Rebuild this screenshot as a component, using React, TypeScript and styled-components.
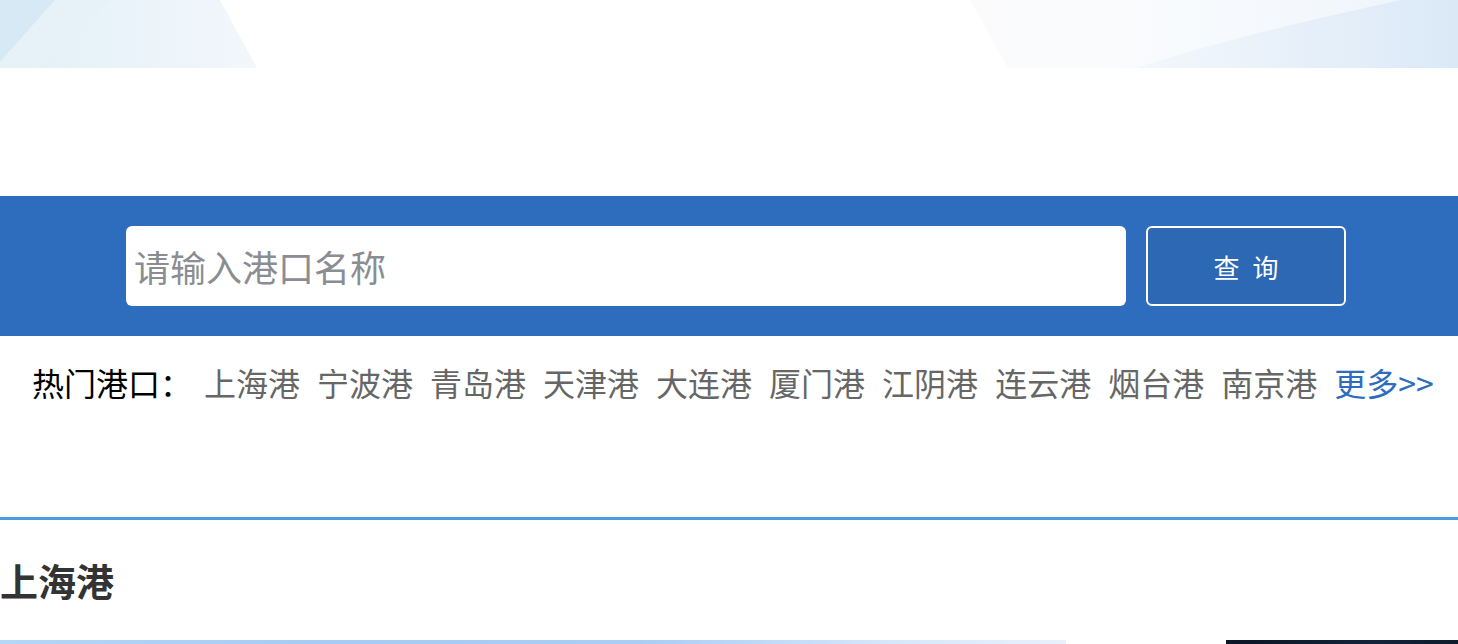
import styled, { createGlobalStyle } from 'styled-components';

const GlobalStyle = createGlobalStyle`
	html, body {
		margin: 0;
		padding: 0;
		background: #ffffff;
		font-family: "Noto Sans CJK SC", "Noto Sans", sans-serif;
	}
	* {
		box-sizing: border-box;
	}
`;

const Page = styled.div`
	width: 100%;
	overflow: hidden;
`;

const Banner = styled.svg`
	display: block;
	width: 100%;
	height: 68px;
`;

const SearchBar = styled.div`
	margin-top: 128px;
	height: 140px;
	background: #2e6dbd;
	display: flex;
	align-items: center;
	padding-left: 126px;
	gap: 20px;
`;

const SearchInput = styled.input`
	width: 1000px;
	height: 80px;
	border: none;
	border-radius: 6px;
	background: #ffffff;
	padding: 0 0 0 8px;
	font-family: inherit;
	font-size: 36px;
	color: #333;
	outline: none;

	&::placeholder {
		color: #8a8d91;
	}
`;

const SearchButton = styled.button`
	width: 200px;
	height: 80px;
	border: 2px solid #ffffff;
	border-radius: 6px;
	background: #2c68b3;
	color: #ffffff;
	font-family: inherit;
	font-size: 26px;
	letter-spacing: 13px;
	padding: 0 0 0 13px;
	cursor: pointer;
`;

const HotRow = styled.div`
	display: flex;
	align-items: center;
	padding: 30px 0 0 32px;
	font-size: 32px;
	line-height: 32px;
	white-space: nowrap;
`;

const HotLabel = styled.span`
	color: #000000;
	margin-right: 12px;
`;

const PortList = styled.div`
	display: flex;
	gap: 17px;
`;

const PortLink = styled.a<{ $more?: boolean }>`
	color: ${(p) => (p.$more ? '#2e6dbd' : '#666666')};
	text-decoration: none;
	cursor: pointer;
`;

const Divider = styled.div`
	margin-top: 119px;
	height: 3px;
	background: #4a9de2;
`;

const PortTitle = styled.h2`
	margin: 40px 0 0;
	font-size: 38px;
	line-height: 40px;
	font-weight: 700;
	color: #333333;
`;

const Gallery = styled.div`
	margin-top: 40px;
	display: flex;
	gap: 160px;
`;

const Slide = styled.div<{ $dark?: boolean; $width: number }>`
	flex: 0 0 ${(p) => p.$width}px;
	height: 200px;
	background: ${(p) =>
		p.$dark
			? 'linear-gradient(90deg, #0b1626 0%, #13233a 50%, #0a1422 100%)'
			: 'linear-gradient(90deg, #b4d6f7 0%, #a6cbf4 30%, #a9cdf5 60%, #d8e8fb 85%, #e9f0fc 100%)'};
`;

const ports = ['上海港', '宁波港', '青岛港', '天津港', '大连港', '厦门港', '江阴港', '连云港', '烟台港', '南京港'];

const App = () => {
	return (
		<Page>
			<GlobalStyle />
			<Banner viewBox="0 0 1458 68" preserveAspectRatio="none">
				<defs>
					<linearGradient id="leftFill" x1="0" y1="0" x2="1" y2="0">
						<stop offset="0" stopColor="#e2eff8" />
						<stop offset="1" stopColor="#f2f7fb" />
					</linearGradient>
					<linearGradient id="rightFill" x1="0" y1="0" x2="1" y2="0">
						<stop offset="0" stopColor="#fbfbfc" />
						<stop offset="0.5" stopColor="#f7fafd" />
						<stop offset="1" stopColor="#eef4fb" />
					</linearGradient>
					<linearGradient id="rightBlue" x1="0" y1="0" x2="1" y2="0">
						<stop offset="0" stopColor="#f3f7fc" />
						<stop offset="1" stopColor="#dbe9f7" />
					</linearGradient>
				</defs>
				<polygon points="0,0 220,0 257,68 0,68" fill="url(#leftFill)" />
				<polygon points="0,0 55,0 0,62" fill="#d7e9f5" />
				<polygon points="55,0 110,0 40,68 0,68 0,62" fill="#e6f2f8" />
				<polygon points="970,0 1458,0 1458,68 1008,68" fill="url(#rightFill)" />
				<path d="M1400,0 L1458,0 L1458,68 L1137,68 C1220,40 1320,18 1400,0 Z" fill="url(#rightBlue)" />
			</Banner>

			<SearchBar>
				<SearchInput placeholder="请输入港口名称" />
				<SearchButton>查询</SearchButton>
			</SearchBar>

			<HotRow>
				<HotLabel>热门港口：</HotLabel>
				<PortList>
					{ports.map((name) => (
						<PortLink key={name}>{name}</PortLink>
					))}
					<PortLink $more>更多&gt;&gt;</PortLink>
				</PortList>
			</HotRow>

			<Divider />
			<PortTitle>上海港</PortTitle>

			<Gallery>
				<Slide $width={1066} />
				<Slide $width={300} $dark />
			</Gallery>
		</Page>
	);
};

export default App;
